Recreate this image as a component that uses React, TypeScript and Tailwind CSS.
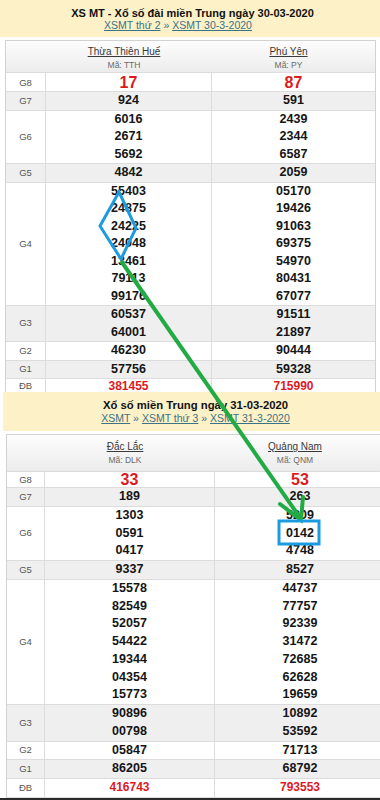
import React from 'react';

type Row = { label: string; a: string[]; b: string[]; gray?: boolean; kind?: 'g8' | 'db' };

type Cfg = {
  line: string;
  dbLine: string;
  g8: string;
  label: string;
  colA: string;
  colB: string;
  header: string;
  headPad: string;
};

const DAY1: Row[] = [
  { label: 'G8', a: ['17'], b: ['87'], kind: 'g8' },
  { label: 'G7', a: ['924'], b: ['591'], gray: true },
  { label: 'G6', a: ['6016', '2671', '5692'], b: ['2439', '2344', '6587'] },
  { label: 'G5', a: ['4842'], b: ['2059'], gray: true },
  {
    label: 'G4',
    a: ['55403', '24875', '24225', '24048', '13461', '79113', '99176'],
    b: ['05170', '19426', '91063', '69375', '54970', '80431', '67077'],
  },
  { label: 'G3', a: ['60537', '64001'], b: ['91511', '21897'], gray: true },
  { label: 'G2', a: ['46230'], b: ['90444'] },
  { label: 'G1', a: ['57756'], b: ['59328'], gray: true },
  { label: 'ĐB', a: ['381455'], b: ['715990'], kind: 'db' },
];

const DAY2: Row[] = [
  { label: 'G8', a: ['33'], b: ['53'], kind: 'g8' },
  { label: 'G7', a: ['189'], b: ['263'], gray: true },
  { label: 'G6', a: ['1303', '0591', '0417'], b: ['5209', '0142', '4748'] },
  { label: 'G5', a: ['9337'], b: ['8527'], gray: true },
  {
    label: 'G4',
    a: ['15578', '82549', '52057', '54422', '19344', '04354', '15773'],
    b: ['44737', '77757', '92339', '31472', '72685', '62628', '19659'],
  },
  { label: 'G3', a: ['90896', '00798'], b: ['10892', '53592'], gray: true },
  { label: 'G2', a: ['05847'], b: ['71713'] },
  { label: 'G1', a: ['86205'], b: ['68792'], gray: true },
  { label: 'ĐB', a: ['416743'], b: ['793553'], kind: 'db' },
];

const S1: Cfg = {
  line: 'leading-[17.5px]',
  dbLine: 'leading-[14px]',
  g8: 'h-[19px] leading-[19px]',
  label: 'w-[40px]',
  colA: 'w-[166px]',
  colB: 'flex-1',
  header: 'h-[32px]',
  headPad: 'pt-[5px]',
};

const S2: Cfg = {
  line: 'leading-[17.75px]',
  dbLine: 'leading-[17.75px]',
  g8: 'h-[16px] leading-[16px]',
  label: 'w-[38px]',
  colA: 'w-[170px]',
  colB: 'w-[170px]',
  header: 'h-[37px]',
  headPad: 'pt-[6px]',
};

const Values = ({ vals, kind, cfg }: { vals: string[]; kind?: string; cfg: Cfg }) => {
  if (kind === 'g8')
    return <div className={`text-[16px] font-bold text-[#dc1b1f] ${cfg.g8}`}>{vals[0]}</div>;
  if (kind === 'db')
    return <div className={`${cfg.dbLine} text-[12px] font-bold text-[#dc1b1f]`}>{vals[0]}</div>;
  return (
    <div>
      {vals.map((v, i) => (
        <div key={i} className={`${cfg.line} text-[12.5px] font-bold text-[#151515]`}>
          {v}
        </div>
      ))}
    </div>
  );
};

const ResultTable = ({
  rows,
  cfg,
  names,
  codes,
  frame,
}: {
  rows: Row[];
  cfg: Cfg;
  names: [string, string];
  codes: [string, string];
  frame: string;
}) => (
  <div className={`border-t border-l border-[#d2d2d2] bg-white ${frame}`}>
    <div className={`flex border-b border-[#dcdcdc] bg-linear-to-b from-[#fdfdfd] to-[#ececec] ${cfg.header} ${cfg.headPad}`}>
      <div className={`${cfg.label} shrink-0`} />
      {[0, 1].map((i) => (
        <div key={i} className={`${i === 0 ? cfg.colA : cfg.colB} shrink-0 flex flex-col items-center pr-[10px]`}>
          <span className="text-[10px] leading-[12px] text-[#3a3a3a] underline">{names[i]}</span>
          <span className="mt-[1px] text-[8.5px] leading-[12px] text-[#6a6a6a]">{codes[i]}</span>
        </div>
      ))}
    </div>
    {rows.map((r) => (
      <div
        key={r.label}
        className={`flex border-b border-[#dcdcdc] ${r.gray ? 'bg-[#efefef]' : 'bg-white'} ${r.kind === 'g8' ? cfg.g8 : ''}`}
      >
        <div className={`${cfg.label} shrink-0 flex items-center justify-center border-r border-[#dcdcdc] text-[9.5px] text-[#555]`}>
          {r.label}
        </div>
        <div className={`${cfg.colA} shrink-0 border-r border-[#dcdcdc] text-center`}>
          <Values vals={r.a} kind={r.kind} cfg={cfg} />
        </div>
        <div className={`${cfg.colB} shrink-0 text-center`}>
          <Values vals={r.b} kind={r.kind} cfg={cfg} />
        </div>
      </div>
    ))}
  </div>
);

export default function App() {
  return (
    <div className="relative w-[380px] h-[800px] overflow-hidden bg-white font-['Liberation_Sans',Arial,sans-serif]">
      {/* 30-03 */}
      <div className="h-[392px] overflow-hidden">
        <div className="h-[37px] bg-[#fdf1c8] flex flex-col items-center pt-[6px] pl-[5px]">
          <div className="text-[11px] leading-[14px] font-bold text-[#111]">XS MT - Xổ số đài miền Trung ngày 30-03-2020</div>
          <div className="text-[10.5px] leading-[11px] text-[#3b7286] mr-[29px]">
            <span className="underline">XSMT thứ 2</span> » <span className="underline">XSMT 30-3-2020</span>
          </div>
        </div>
        <div className="h-[3px]" />
        <ResultTable
          rows={DAY1}
          cfg={S1}
          names={['Thừa Thiên Huế', 'Phú Yên']}
          codes={['Mã: TTH', 'Mã: PY']}
          frame="ml-[5px] w-[371px] border-r"
        />
      </div>

      {/* 31-03 */}
      <div className="h-[406px] overflow-hidden">
        <div className="ml-[3px] h-[39px] bg-[#fdf1c8] flex flex-col items-center pt-[7px] pl-[8px]">
          <div className="text-[11.3px] leading-[13px] font-bold text-[#111]">Xổ số miền Trung ngày 31-03-2020</div>
          <div className="text-[10.5px] leading-[12px] text-[#3b7286]">
            <span className="underline">XSMT</span> » <span className="underline">XSMT thứ 3</span> »{' '}
            <span className="underline">XSMT 31-3-2020</span>
          </div>
        </div>
        <div className="h-[3px]" />
        <ResultTable
          rows={DAY2}
          cfg={S2}
          names={['Đắc Lắc', 'Quảng Nam']}
          codes={['Mã: DLK', 'Mã: QNM']}
          frame="ml-[6px] w-[400px]"
        />
      </div>
      <div className="h-[2px] bg-[#2a2a2a]" />

      {/* annotation */}
      <svg className="absolute left-0 top-0 pointer-events-none" width="380" height="800" viewBox="0 0 380 800">
        <polygon points="119,192 136,228 121,259 100,226" fill="none" stroke="#1d9be0" strokeWidth="3" strokeLinejoin="miter" />
        <line x1="121" y1="261" x2="301" y2="519" stroke="#22ab44" strokeWidth="4" />
        <polyline points="280,504 301,520 303,497" fill="none" stroke="#22ab44" strokeWidth="4" strokeLinecap="round" />
        <rect x="279" y="521" width="40" height="23" fill="none" stroke="#1d9be0" strokeWidth="3" />
      </svg>
    </div>
  );
}
